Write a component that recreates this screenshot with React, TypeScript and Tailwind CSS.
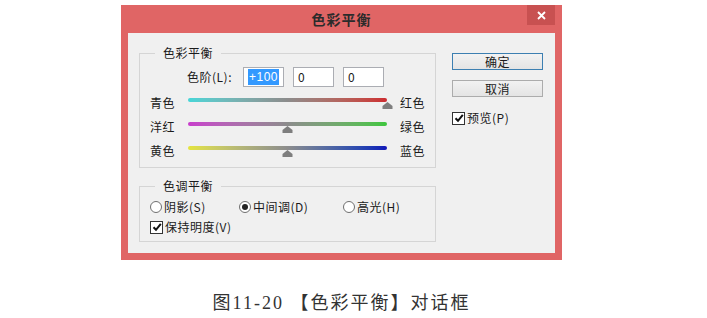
import React from 'react'

const ui = { fontFamily: '"Noto Sans CJK SC", "Microsoft YaHei", sans-serif' }

function Check() {
  return (
    <span className="w-[13px] h-[13px] border border-[#333] bg-white flex items-center justify-center shrink-0">
      <svg width="10" height="10" viewBox="0 0 10 10">
        <path d="M1.5 5.2 L4 7.8 L8.8 1.8" fill="none" stroke="#111" strokeWidth="2" />
      </svg>
    </span>
  )
}

function Radio({ on }: { on?: boolean }) {
  return (
    <span className="w-[12px] h-[12px] rounded-full border border-[#6f6f6f] bg-white flex items-center justify-center shrink-0">
      {on && <span className="w-[6px] h-[6px] rounded-full bg-[#222]" />}
    </span>
  )
}

type SliderProps = { left: string; right: string; track: string; value: number }

function SliderRow({ left, right, track, value }: SliderProps) {
  return (
    <div className="flex items-center h-[24px]">
      <span className="w-[38px]">{left}</span>
      <div className="w-[199px] h-[24px] relative">
        <div className={`absolute left-0 right-0 top-[7px] h-[4px] rounded-full ${track}`} />
        <svg
          className="absolute top-[11px]"
          style={{ left: `calc(${value}% - 5.5px)` }}
          width="11"
          height="7"
          viewBox="0 0 11 7">
          <path d="M5.5 0 L10.5 4 L10.5 7 L0.5 7 L0.5 4 Z" fill="#7e7e7e" />
        </svg>
      </div>
      <span className="ml-[13px]">{right}</span>
    </div>
  )
}

function NumBox({ children }: { children: React.ReactNode }) {
  return (
    <div className="w-[41px] h-[20px] border border-[#abadb3] bg-white flex items-center pl-[4px] text-[12px]">
      {children}
    </div>
  )
}

export default function App() {
  return (
    <div className="w-[707px] h-[318px] bg-white flex flex-col overflow-hidden text-[#1b1b1b]">
      <div
        className="ml-[121px] mt-[5px] w-[441px] h-[255px] bg-[#e06565] flex flex-col px-[7px] pb-[7px]"
        style={ui}>
        <div className="h-[28px] grid grid-cols-[1fr_auto_1fr]">
          <div />
          <div className="self-center text-[14px] font-bold leading-[18px] text-[#2b2b2b] tracking-[1px]">色彩平衡</div>
          <div className="justify-self-end w-[28px] h-[20px] bg-[#c85151] flex items-center justify-center">
            <svg width="9" height="9" viewBox="0 0 9 9">
              <path d="M1 1 L8 8 M8 1 L1 8" stroke="#fff" strokeWidth="1.8" />
            </svg>
          </div>
        </div>

        <div className="flex-1 bg-[#f0f0f0] flex px-[11px] text-[12px] leading-[16px] tracking-[0.5px]">
          <div className="w-[297px] flex flex-col">
            <fieldset className="mt-[12px] h-[123px] border border-[#d5d5d5] pl-[10px]">
              <legend className="ml-[5px] px-[8px] leading-[16px]">色彩平衡</legend>
              <div className="flex items-center mt-[6px] ml-[37px]">
                <span className="w-[56px]">色阶(L):</span>
                <div className="flex gap-[9px]">
                  <NumBox>
                    <span className="bg-[#3399ff] text-white px-[1px] leading-[16px]" style={{ fontFamily: '"Liberation Sans", sans-serif' }}>+100</span>
                  </NumBox>
                  <NumBox>0</NumBox>
                  <NumBox>0</NumBox>
                </div>
              </div>
              <div className="mt-[4px] flex flex-col">
                <SliderRow left="青色" right="红色" value={100} track="bg-linear-to-r from-[#45d6d8] via-[#8c8c8c] to-[#cc2a30]" />
                <SliderRow left="洋红" right="绿色" value={50} track="bg-linear-to-r from-[#c83ccc] via-[#8c8c8c] to-[#3cc63c]" />
                <SliderRow left="黄色" right="蓝色" value={50} track="bg-linear-to-r from-[#e4e43c] via-[#8c8c8c] to-[#1414b8]" />
              </div>
            </fieldset>

            <fieldset className="mt-[10px] h-[64px] border border-[#d5d5d5] pl-[10px]">
              <legend className="ml-[5px] px-[8px] leading-[16px]">色调平衡</legend>
              <div className="flex items-center h-[20px] mt-[3px]">
                <label className="w-[89px] flex items-center gap-[2px]">
                  <Radio />
                  <span>阴影(S)</span>
                </label>
                <label className="w-[104px] flex items-center gap-[2px]">
                  <Radio on />
                  <span>中间调(D)</span>
                </label>
                <label className="flex items-center gap-[2px]">
                  <Radio />
                  <span>高光(H)</span>
                </label>
              </div>
              <label className="flex items-center h-[20px] gap-[2px]">
                <Check />
                <span>保持明度(V)</span>
              </label>
            </fieldset>
          </div>

          <div className="ml-[16px] mt-[20px] w-[91px] flex flex-col">
            <button className="h-[17px] border border-[#3c7fb1] bg-linear-to-b from-[#f2f2f2] to-[#e4e4e4] text-[12px] leading-[15px]">
              确定
            </button>
            <button className="mt-[10px] h-[17px] border border-[#acacac] bg-linear-to-b from-[#f2f2f2] to-[#e4e4e4] text-[12px] leading-[15px]">
              取消
            </button>
            <label className="mt-[11px] h-[20px] flex items-center gap-[2px]">
              <Check />
              <span>预览(P)</span>
            </label>
          </div>
        </div>
      </div>

      <div
        className="ml-[121px] mt-[31px] w-[441px] text-center text-[18px] leading-[24px] tracking-[2px] text-[#333]"
        style={{ fontFamily: '"Liberation Serif", "Noto Sans CJK SC", serif' }}>
        图11-20 【色彩平衡】对话框
      </div>
    </div>
  )
}
